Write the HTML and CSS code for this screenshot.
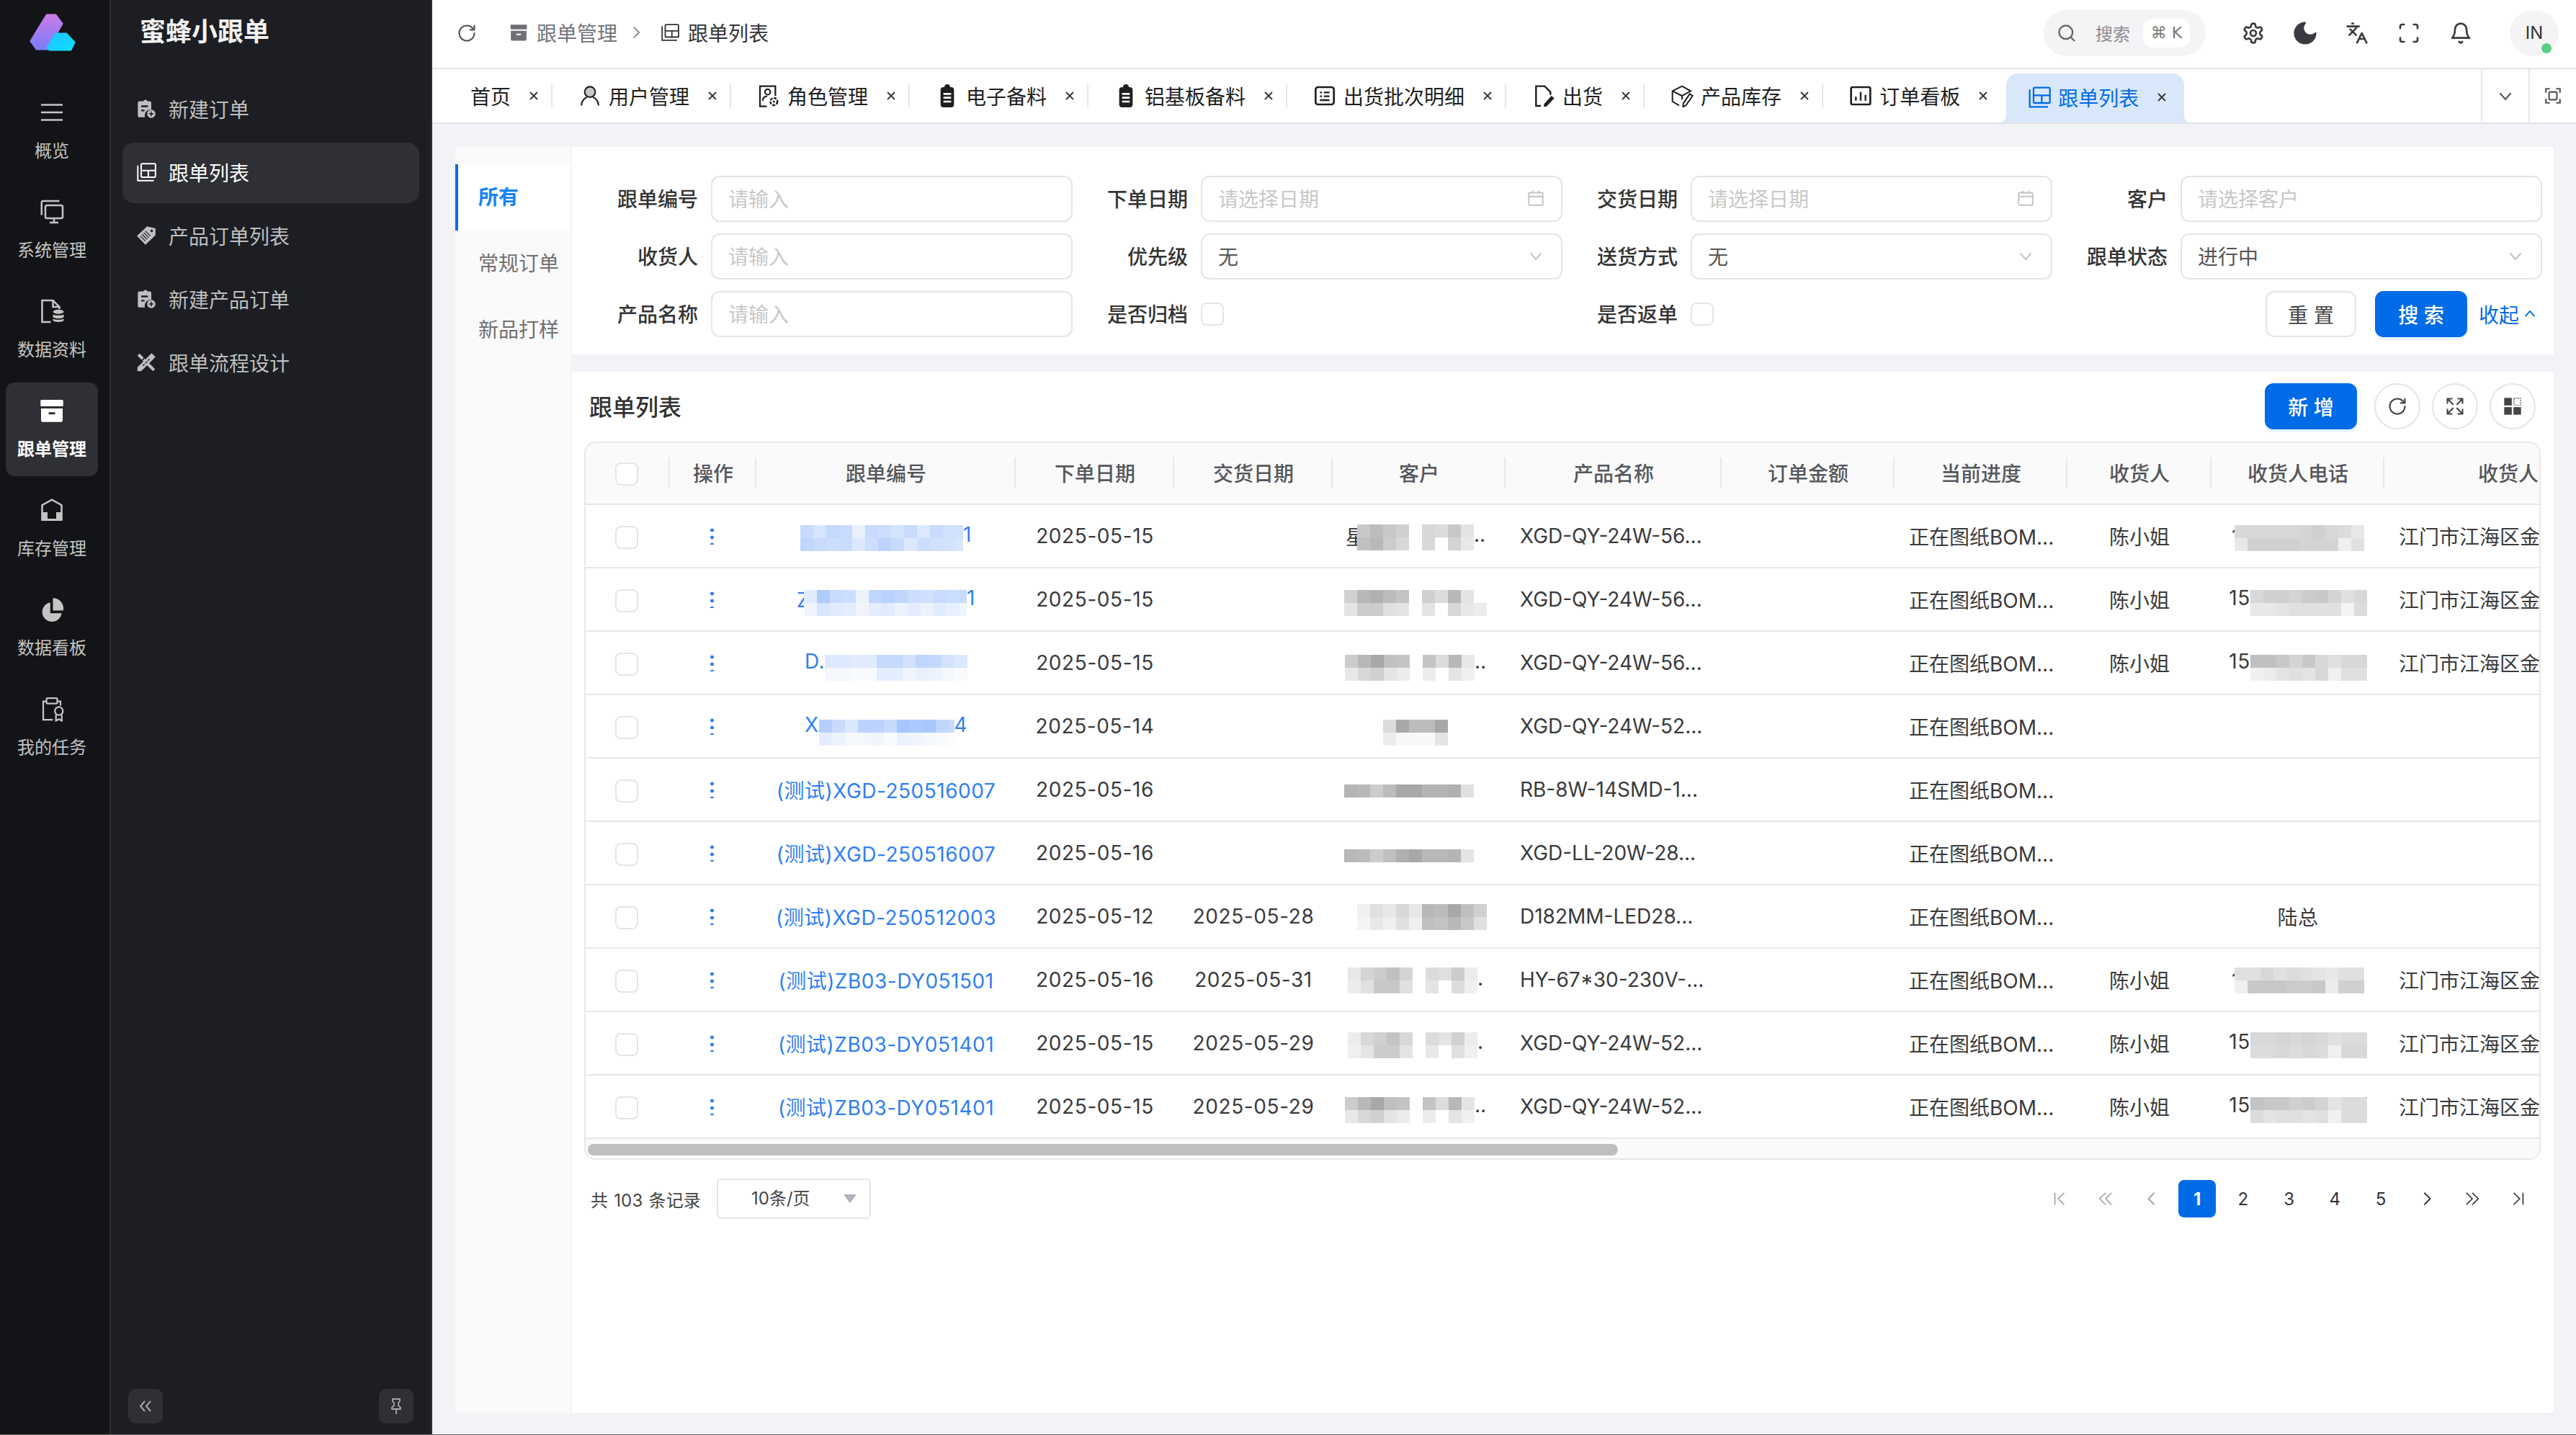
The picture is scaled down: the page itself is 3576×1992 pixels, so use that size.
FILE: index.html
```html
<!DOCTYPE html>
<html lang="zh-CN">
<head>
    <meta charset="UTF-8">
    <title>跟单列表</title>
    <link rel="stylesheet" href="styles.css">
</head>
<body>
    <svg class="icon-defs" xmlns="http://www.w3.org/2000/svg">
        <symbol id="i-menu" viewBox="0 0 24 24"><path d="M2 5h20M2 12h20M2 19h20" fill="none" stroke="currentColor" stroke-width="1.7"/></symbol>
        <symbol id="i-monitor" viewBox="0 0 24 24"><path d="M19 2H4a1.5 1.5 0 0 0-1.500 1.500V15" fill="none" stroke="currentColor" stroke-width="1.700"/><rect x="6" y="6" width="16" height="12" rx="1.500" fill="none" stroke="currentColor" stroke-width="1.700"/><path d="M14 18v3.500M10 22h8" fill="none" stroke="currentColor" stroke-width="1.700"/></symbol>
        <symbol id="i-docdb" viewBox="0 0 24 24"><path d="M11 22H3V2h10l6 6v2M13 2v6h6" fill="none" stroke="currentColor" stroke-width="1.700"/><ellipse cx="18" cy="12.500" rx="5" ry="2" fill="currentColor"/><path d="M13 15c1 1.200 9 1.200 10 0v2.500c-1 1.600-9 1.600-10 0zM13 19c1 1.200 9 1.200 10 0v1.500c-1 2-9 2-10 0z" fill="currentColor"/></symbol>
        <symbol id="i-box" viewBox="0 0 24 24"><rect x="1.500" y="2" width="21" height="6" rx="1" fill="currentColor"/><path fill-rule="evenodd" d="M2 10h20v11a1.500 1.500 0 0 1-1.500 1.500h-17A1.500 1.500 0 0 1 2 21zM9 13.500v2h6v-2z" fill="currentColor"/></symbol>
        <symbol id="i-store" viewBox="0 0 24 24"><path d="M3 21V7.500L12 2.500l9 5V21z" fill="none" stroke="currentColor" stroke-width="1.700"/><path d="M2.500 14H8v6h8v-6h5.500v8h-19z" fill="currentColor"/></symbol>
        <symbol id="i-pie" viewBox="0 0 24 24"><path d="M10.500 5.500A9 9 0 1 0 21 15.500H10.500z" fill="currentColor"/><path d="M13 1.500a9.500 9.500 0 0 1 9.500 11.500H13z" fill="currentColor"/></symbol>
        <symbol id="i-task" viewBox="0 0 24 24"><path d="M7 5H4v17h9M17 5h3v4" fill="none" stroke="currentColor" stroke-width="1.500"/><rect x="7" y="2" width="10" height="5" rx="1" fill="none" stroke="currentColor" stroke-width="1.500"/><circle cx="18.500" cy="14" r="3.700" fill="none" stroke="currentColor" stroke-width="1.500"/><path d="M15.800 17.500v5.500l2.700-1.500 2.700 1.500v-5.500" fill="none" stroke="currentColor" stroke-width="1.500"/></symbol>
        <symbol id="i-clipplus" viewBox="0 0 24 24"><path fill-rule="evenodd" d="M7 3h1.500a2.700 2.700 0 0 1 5 0H16a2 2 0 0 1 2 2v8a7 7 0 0 0-7.500 9H3a2 2 0 0 1-1-1.500V5a2 2 0 0 1 2-2zM6 8v2h8V8zM6 13v2h4v-2z" fill="currentColor"/><circle cx="18" cy="18" r="5" fill="currentColor"/><path d="M18 15.200v5.600M15.200 18h5.600" stroke="#1c1e23" stroke-width="1.300"/></symbol>
        <symbol id="i-table" viewBox="0 0 24 24"><path d="M2 4v18h19" fill="none" stroke="currentColor" stroke-width="1.700"/><rect x="6" y="2" width="17" height="16" rx="1" fill="none" stroke="currentColor" stroke-width="1.700"/><path d="M6 10h17M14.500 10v8" fill="none" stroke="currentColor" stroke-width="1.700"/></symbol>
        <symbol id="i-tag" viewBox="0 0 24 24"><path fill-rule="evenodd" d="M13 1l10 2.500 0 8L11 23 1 12.500zM18.500 5a1.500 1.500 0 1 0 .1 3 1.500 1.500 0 0 0-.1-3z" fill="currentColor"/><path d="M11 6.500l6 6M9 8.500l6 6M7 10.500l6 6M5 12.500l6 6" stroke="#1c1e23" stroke-width="1"/></symbol>
        <symbol id="i-tools" viewBox="0 0 24 24"><path d="M4 1.500 9 6.500 6.500 9 7.500 10 10 7.500 22.500 20 20 22.500 1.500 4z" fill="currentColor"/><path d="M18.500 1 23 5.500 6 22.500H1.500V18z" fill="currentColor"/><path d="M14 10l2-2M11 13l2-2M8 16l2-2" stroke="#1c1e23" stroke-width="1.200"/></symbol>
        <symbol id="i-user" viewBox="0 0 24 24"><circle cx="12" cy="8" r="5.500" fill="#c8c8c8" stroke="currentColor" stroke-width="1.600"/><path d="M3 22c.5-5 3.500-8 6-8.500M21 22c-.5-5-3.500-8-6-8.500" fill="none" stroke="currentColor" stroke-width="1.600"/></symbol>
        <symbol id="i-role" viewBox="0 0 24 24"><path d="M10 23H3V2h16v10" fill="none" stroke="currentColor" stroke-width="1.700"/><circle cx="11" cy="8" r="2.800" fill="none" stroke="currentColor" stroke-width="1.700"/><path d="M6 17c0-3 2-4.500 4.500-4.500" fill="none" stroke="currentColor" stroke-width="1.700"/><circle cx="17.500" cy="18" r="3.700" fill="none" stroke="currentColor" stroke-width="1.900" stroke-dasharray="3 1.200"/><circle cx="17.500" cy="18" r="1.200" fill="currentColor"/></symbol>
        <symbol id="i-clip" viewBox="0 0 24 24"><path fill-rule="evenodd" d="M8 3h1a3 3 0 0 1 6 0h1a3 3 0 0 1 3 3v15a3 3 0 0 1-3 3H8a3 3 0 0 1-3-3V6a3 3 0 0 1 3-3zM8 9v2h8V9zM8 13v2h8v-2zM8 17v2h8v-2z" fill="currentColor"/></symbol>
        <symbol id="i-list" viewBox="0 0 24 24"><rect x="2.500" y="3" width="19" height="18" rx="2.500" fill="none" stroke="currentColor" stroke-width="2"/><path d="M7 8.500h2M11 8.500h6M7 12.500h2M11 12.500h6M7 16.500h10" stroke="currentColor" stroke-width="1.800"/></symbol>
        <symbol id="i-ship" viewBox="0 0 24 24"><path d="M9 22.500H4V2h9l6 6v3" fill="none" stroke="currentColor" stroke-width="1.800"/><path d="M20 12l3 2.500-8 8.500-3 .5.500-3z" fill="currentColor"/></symbol>
        <symbol id="i-stock" viewBox="0 0 24 24"><path d="M12 2 2 7v11l7 4M12 2l9 5-9 5-10-5M12 12v4" fill="none" stroke="currentColor" stroke-width="1.500"/><path d="M20 10l3 2-7 10-3 1.500.3-3.500z" fill="none" stroke="currentColor" stroke-width="1.500"/></symbol>
        <symbol id="i-board" viewBox="0 0 24 24"><rect x="2" y="3" width="20" height="18" rx="1.500" fill="none" stroke="currentColor" stroke-width="2"/><path d="M7 17v-4M12 17V8M17 17v-6" stroke="currentColor" stroke-width="1.800"/></symbol>
        <symbol id="i-refresh" viewBox="0 0 24 24"><path d="M21 12a9 9 0 1 1-9-9c2.520 0 4.930 1 6.740 2.740L21 8M21 3v5h-5" fill="none" stroke="currentColor" stroke-width="1.800" stroke-linecap="round" stroke-linejoin="round"/></symbol>
        <symbol id="i-search" viewBox="0 0 24 24"><circle cx="11" cy="11" r="8" fill="none" stroke="currentColor" stroke-width="2"/><path d="m21 21-4.300-4.300" stroke="currentColor" stroke-width="2" stroke-linecap="round"/></symbol>
        <symbol id="i-settings" viewBox="0 0 24 24"><path d="M12.220 2h-.44a2 2 0 0 0-2 2v.18a2 2 0 0 1-1 1.730l-.43.25a2 2 0 0 1-2 0l-.15-.08a2 2 0 0 0-2.730.73l-.22.38a2 2 0 0 0 .73 2.730l.15.1a2 2 0 0 1 1 1.720v.51a2 2 0 0 1-1 1.740l-.15.09a2 2 0 0 0-.73 2.730l.22.38a2 2 0 0 0 2.730.73l.15-.08a2 2 0 0 1 2 0l.43.25a2 2 0 0 1 1 1.730V20a2 2 0 0 0 2 2h.44a2 2 0 0 0 2-2v-.18a2 2 0 0 1 1-1.730l.43-.25a2 2 0 0 1 2 0l.15.08a2 2 0 0 0 2.730-.73l.22-.39a2 2 0 0 0-.73-2.730l-.15-.08a2 2 0 0 1-1-1.740v-.5a2 2 0 0 1 1-1.740l.15-.09a2 2 0 0 0 .73-2.730l-.22-.38a2 2 0 0 0-2.730-.73l-.15.08a2 2 0 0 1-2 0l-.43-.25a2 2 0 0 1-1-1.730V4a2 2 0 0 0-2-2z" fill="none" stroke="currentColor" stroke-width="2"/><circle cx="12" cy="12" r="3" fill="none" stroke="currentColor" stroke-width="2"/></symbol>
        <symbol id="i-moon" viewBox="2 2 20 20"><path d="M12 3a6 6 0 0 0 9 9 9 9 0 1 1-9-9Z" fill="currentColor" stroke="currentColor" stroke-width="1.500" stroke-linejoin="round"/></symbol>
        <symbol id="i-lang" viewBox="0 0 24 24"><path d="m5 8 6 6M4 14l6-6 2-3M2 5h12M7 2h1M22 22l-5-10-5 10M14 18h6" fill="none" stroke="currentColor" stroke-width="2" stroke-linecap="round" stroke-linejoin="round"/></symbol>
        <symbol id="i-full" viewBox="0 0 24 24"><path d="M3 7V5a2 2 0 0 1 2-2h2M17 3h2a2 2 0 0 1 2 2v2M21 17v2a2 2 0 0 1-2 2h-2M7 21H5a2 2 0 0 1-2-2v-2" fill="none" stroke="currentColor" stroke-width="2" stroke-linecap="round"/></symbol>
        <symbol id="i-bell" viewBox="0 0 24 24"><path d="M6 8a6 6 0 0 1 12 0c0 7 3 9 3 9H3s3-2 3-9M10.300 21a1.940 1.940 0 0 0 3.400 0" fill="none" stroke="currentColor" stroke-width="2" stroke-linecap="round" stroke-linejoin="round"/></symbol>
        <symbol id="i-close" viewBox="0 0 14 14"><path d="M2 2l10 10M12 2 2 12" stroke="currentColor" stroke-width="1.800"/></symbol>
        <symbol id="i-down" viewBox="0 0 24 24"><path d="M5 8.500l7 8 7-8" fill="none" stroke="currentColor" stroke-width="2"/></symbol>
        <symbol id="i-scan" viewBox="0 0 24 24"><path d="M3 8V3h5M16 3h5v5M21 16v5h-5M8 21H3v-5" fill="none" stroke="currentColor" stroke-width="2"/><rect x="7" y="7" width="10" height="10" rx="1.500" fill="none" stroke="currentColor" stroke-width="2"/></symbol>
        <symbol id="i-cal" viewBox="0 0 24 24"><rect x="3" y="5" width="18" height="16" rx="1.500" fill="none" stroke="currentColor" stroke-width="1.800"/><path d="M3 10h18M8 2.500V6M16 2.500V6" stroke="currentColor" stroke-width="1.800"/></symbol>
        <symbol id="i-grid" viewBox="0 0 24 24"><rect x="2" y="2" width="9" height="9" fill="currentColor"/><rect x="2" y="13" width="9" height="9" fill="currentColor"/><rect x="13" y="13" width="9" height="9" fill="currentColor"/><rect x="13.500" y="2.500" width="8" height="8" fill="none" stroke="currentColor" stroke-dasharray="1.500 1"/></symbol>
        <symbol id="i-expand" viewBox="0 0 24 24"><path d="M3 9V3h6M3 3l7 7M15 3h6v6M21 3l-7 7M21 15v6h-6M21 21l-7-7M9 21H3v-6M3 21l7-7" fill="none" stroke="currentColor" stroke-width="1.800"/></symbol>
        <symbol id="i-first" viewBox="0 0 24 24"><path d="M5 3v18M19 3l-9 9 9 9" fill="none" stroke="currentColor" stroke-width="1.800"/></symbol>
        <symbol id="i-prev2" viewBox="0 0 24 24"><path d="M12 3l-9 9 9 9M21 3l-9 9 9 9" fill="none" stroke="currentColor" stroke-width="1.800"/></symbol>
        <symbol id="i-prev" viewBox="0 0 24 24"><path d="M16 3l-9 9 9 9" fill="none" stroke="currentColor" stroke-width="2"/></symbol>
        <symbol id="i-next" viewBox="0 0 24 24"><path d="M8 3l9 9-9 9" fill="none" stroke="currentColor" stroke-width="2"/></symbol>
        <symbol id="i-next2" viewBox="0 0 24 24"><path d="M3 3l9 9-9 9M12 3l9 9-9 9" fill="none" stroke="currentColor" stroke-width="1.800"/></symbol>
        <symbol id="i-last" viewBox="0 0 24 24"><path d="M19 3v18M5 3l9 9-9 9" fill="none" stroke="currentColor" stroke-width="1.800"/></symbol>
        <symbol id="i-left2" viewBox="0 0 24 24"><path d="M11 5l-6 7 6 7M19 5l-6 7 6 7" fill="none" stroke="currentColor" stroke-width="2"/></symbol>
        <symbol id="i-pin" viewBox="0 0 24 24"><path d="M7 2h10v3l-2 2.500v3.500l3 3v2H6v-2l3-3V7.500L7 5zM12 16v7" fill="none" stroke="currentColor" stroke-width="1.800" stroke-linejoin="round"/></symbol>
        <linearGradient id="logo-a" x1="0" y1="0" x2="0" y2="1"><stop offset="0" stop-color="#cb7be6"/><stop offset="1" stop-color="#7a7cfb"/></linearGradient>
        <linearGradient id="logo-b" x1="0" y1="0" x2="1" y2="1"><stop offset="0" stop-color="#1cc4ff"/><stop offset="1" stop-color="#12dcff"/></linearGradient>
    </svg>

    <div class="app">
        <nav class="rail">
            <svg class="logo" viewBox="0 0 64 52">
                <path d="M24 2h12l9 12-20 35H10L2 38z" fill="url(#logo-a)" stroke="url(#logo-a)" stroke-width="3" stroke-linejoin="round"/>
                <path d="M36 28h15l11 12-5 10H28l-3-2z" fill="url(#logo-b)" stroke="url(#logo-b)" stroke-width="3" stroke-linejoin="round"/>
            </svg>
            <a class="rail-item"><svg><use href="#i-menu"/></svg>概览</a>
            <a class="rail-item"><svg><use href="#i-monitor"/></svg>系统管理</a>
            <a class="rail-item"><svg><use href="#i-docdb"/></svg>数据资料</a>
            <a class="rail-item rail-active"><svg><use href="#i-box"/></svg>跟单管理</a>
            <a class="rail-item"><svg><use href="#i-store"/></svg>库存管理</a>
            <a class="rail-item"><svg><use href="#i-pie"/></svg>数据看板</a>
            <a class="rail-item"><svg><use href="#i-task"/></svg>我的任务</a>
        </nav>

        <aside class="menu">
            <div class="menu-title">蜜蜂小跟单</div>
            <a class="menu-item"><svg><use href="#i-clipplus"/></svg>新建订单</a>
            <a class="menu-item menu-active"><svg><use href="#i-table"/></svg>跟单列表</a>
            <a class="menu-item"><svg><use href="#i-tag"/></svg>产品订单列表</a>
            <a class="menu-item"><svg><use href="#i-clipplus"/></svg>新建产品订单</a>
            <a class="menu-item"><svg><use href="#i-tools"/></svg>跟单流程设计</a>
            <div class="menu-foot">
                <button class="menu-btn"><svg><use href="#i-left2"/></svg></button>
                <button class="menu-btn"><svg><use href="#i-pin"/></svg></button>
            </div>
        </aside>

        <div class="main">
            <header class="topbar">
                <svg class="top-refresh"><use href="#i-refresh"/></svg>
                <div class="crumbs">
                    <svg class="crumb-icon"><use href="#i-box"/></svg><span class="crumb-dim">跟单管理</span>
                    <svg class="crumb-sep"><use href="#i-next"/></svg>
                    <svg class="crumb-icon crumb-now"><use href="#i-table"/></svg><span class="crumb-now">跟单列表</span>
                </div>
                <div class="search-pill">
                    <svg><use href="#i-search"/></svg><span class="search-text">搜索</span><span class="kbd">⌘ K</span>
                </div>
                <svg class="top-icon"><use href="#i-settings"/></svg>
                <svg class="top-icon"><use href="#i-moon"/></svg>
                <svg class="top-icon"><use href="#i-lang"/></svg>
                <svg class="top-icon"><use href="#i-full"/></svg>
                <svg class="top-icon"><use href="#i-bell"/></svg>
                <div class="avatar">IN<span class="avatar-dot"></span></div>
            </header>

            <div class="tabbar">
                <div class="tabs">
                    <a class="tab">首页<svg class="tab-x"><use href="#i-close"/></svg></a><i class="tab-sep"></i>
                    <a class="tab"><svg class="tab-icon"><use href="#i-user"/></svg>用户管理<svg class="tab-x"><use href="#i-close"/></svg></a><i class="tab-sep"></i>
                    <a class="tab"><svg class="tab-icon"><use href="#i-role"/></svg>角色管理<svg class="tab-x"><use href="#i-close"/></svg></a><i class="tab-sep"></i>
                    <a class="tab"><svg class="tab-icon"><use href="#i-clip"/></svg>电子备料<svg class="tab-x"><use href="#i-close"/></svg></a><i class="tab-sep"></i>
                    <a class="tab"><svg class="tab-icon"><use href="#i-clip"/></svg>铝基板备料<svg class="tab-x"><use href="#i-close"/></svg></a><i class="tab-sep"></i>
                    <a class="tab"><svg class="tab-icon"><use href="#i-list"/></svg>出货批次明细<svg class="tab-x"><use href="#i-close"/></svg></a><i class="tab-sep"></i>
                    <a class="tab"><svg class="tab-icon"><use href="#i-ship"/></svg>出货<svg class="tab-x"><use href="#i-close"/></svg></a><i class="tab-sep"></i>
                    <a class="tab"><svg class="tab-icon"><use href="#i-stock"/></svg>产品库存<svg class="tab-x"><use href="#i-close"/></svg></a><i class="tab-sep"></i>
                    <a class="tab"><svg class="tab-icon"><use href="#i-board"/></svg>订单看板<svg class="tab-x"><use href="#i-close"/></svg></a>
                    <a class="tab tab-active"><svg class="tab-icon"><use href="#i-table"/></svg>跟单列表<svg class="tab-x"><use href="#i-close"/></svg></a>
                </div>
                <div class="tab-tool"><svg><use href="#i-down"/></svg></div>
                <div class="tab-tool"><svg><use href="#i-scan"/></svg></div>
            </div>

            <div class="content">
                <div class="side-tabs">
                    <a class="side-tab side-tab-active">所有</a>
                    <a class="side-tab">常规订单</a>
                    <a class="side-tab">新品打样</a>
                </div>
                <div class="panels">
                    <form class="filter">
                        <div class="field"><label>跟单编号</label><div class="input placeholder">请输入</div></div>
                        <div class="field"><label>下单日期</label><div class="input placeholder">请选择日期<svg><use href="#i-cal"/></svg></div></div>
                        <div class="field"><label>交货日期</label><div class="input placeholder">请选择日期<svg><use href="#i-cal"/></svg></div></div>
                        <div class="field"><label>客户</label><div class="input placeholder">请选择客户</div></div>
                        <div class="field"><label>收货人</label><div class="input placeholder">请输入</div></div>
                        <div class="field"><label>优先级</label><div class="input">无<svg><use href="#i-down"/></svg></div></div>
                        <div class="field"><label>送货方式</label><div class="input">无<svg><use href="#i-down"/></svg></div></div>
                        <div class="field"><label>跟单状态</label><div class="input">进行中<svg><use href="#i-down"/></svg></div></div>
                        <div class="field"><label>产品名称</label><div class="input placeholder">请输入</div></div>
                        <div class="field"><label>是否归档</label><span class="check"></span></div>
                        <div class="field"><label>是否返单</label><span class="check"></span></div>
                        <div class="field field-actions">
                            <button type="button" class="btn">重 置</button>
                            <button type="button" class="btn btn-primary">搜 索</button>
                            <a class="collapse">收起<svg><use href="#i-down"/></svg></a>
                        </div>
                    </form>

                    <section class="card">
                        <div class="card-head">
                            <h2>跟单列表</h2>
                            <button type="button" class="btn btn-primary">新 增</button>
                            <button type="button" class="round"><svg><use href="#i-refresh"/></svg></button>
                            <button type="button" class="round"><svg><use href="#i-expand"/></svg></button>
                            <button type="button" class="round"><svg><use href="#i-grid"/></svg></button>
                        </div>
                        <div class="table-box">
                            <table class="orders">
                                <colgroup>
                                    <col class="c1"><col class="c2"><col class="c3"><col class="c4"><col class="c4"><col class="c5"><col class="c6"><col class="c5"><col class="c5"><col class="c7"><col class="c5"><col class="c8">
                                </colgroup>
                                <thead>
                                    <tr>
                                        <th><span class="check"></span></th>
                                        <th>操作</th>
                                        <th>跟单编号</th>
                                        <th>下单日期</th>
                                        <th>交货日期</th>
                                        <th>客户</th>
                                        <th>产品名称</th>
                                        <th>订单金额</th>
                                        <th>当前进度</th>
                                        <th>收货人</th>
                                        <th>收货人电话</th>
                                        <th>收货人地址</th>
                                    </tr>
                                </thead>
                                <tbody id="rows"></tbody>
                            </table>
                            <div class="scrollbar"><div class="scroll-thumb"></div></div>
                        </div>
                        <div class="pager">
                            <span class="total">共 103 条记录</span>
                            <div class="size-select">10条/页<i class="caret"></i></div>
                            <div class="pages">
                                <a class="page page-off"><svg><use href="#i-first"/></svg></a>
                                <a class="page page-off"><svg><use href="#i-prev2"/></svg></a>
                                <a class="page page-off"><svg><use href="#i-prev"/></svg></a>
                                <a class="page page-on">1</a>
                                <a class="page">2</a>
                                <a class="page">3</a>
                                <a class="page">4</a>
                                <a class="page">5</a>
                                <a class="page"><svg><use href="#i-next"/></svg></a>
                                <a class="page"><svg><use href="#i-next2"/></svg></a>
                                <a class="page"><svg><use href="#i-last"/></svg></a>
                            </div>
                        </div>
                    </section>
                </div>
            </div>
        </div>
    </div>
    <script src="table.js"></script>
</body>
</html>
```

FILE: styles.css
```css
* {
    box-sizing: border-box;
}
html, body {
    margin: 0;
    height: 100%;
}
body {
    font-family: Inter, "Noto Sans CJK SC", "DejaVu Sans", sans-serif;
    font-size: 28px;
    color: #333;
    background: #6e6e6e;
    overflow: hidden;
}
svg {
    display: block;
}
.icon-defs {
    position: absolute;
    width: 0;
    height: 0;
}
.app {
    display: flex;
    height: 1991px;
}

/* left rail */
.rail {
    width: 154px;
    padding: 0 16px 0 8px;
    background: #131417;
    border-right: 2px solid #2c2e33;
    display: flex;
    flex-direction: column;
    gap: 8px;
}
.logo {
    width: 64px;
    height: 52px;
    margin: 19px 0 38px 33px;
    flex: none;
}
.rail-item {
    width: 128px;
    height: 130px;
    border-radius: 12px;
    display: flex;
    flex-direction: column;
    align-items: center;
    font-size: 24px;
    line-height: 32px;
    color: #c4c4c4;
    padding-top: 21px;
    gap: 20px;
}
.rail-item svg {
    width: 36px;
    height: 36px;
}
.rail-active {
    background: #2e3035;
    color: #fff;
    font-weight: 700;
}

/* second menu */
.menu {
    position: relative;
    width: 446px;
    padding: 0 16px;
    background: #1c1e23;
    border-right: 2px solid #2c2e33;
    display: flex;
    flex-direction: column;
    gap: 4px;
}
.menu-title {
    height: 106px;
    padding: 23px 0 0 24px;
    font-size: 36px;
    font-weight: 700;
    line-height: 42px;
    color: #f2f2f2;
}
.menu-item {
    height: 84px;
    border-radius: 16px;
    display: flex;
    align-items: center;
    gap: 17px;
    padding: 0 0 2px 19px;
    color: #bfbfbf;
}
.menu-item svg {
    width: 28px;
    height: 28px;
}
.menu-active {
    background: #2e3035;
    color: #fff;
}
.menu-foot {
    margin-top: auto;
    margin-bottom: 15px;
    padding: 0 8px;
    display: flex;
    justify-content: space-between;
}
.menu-btn {
    width: 48px;
    height: 48px;
    padding: 0;
    border: none;
    border-radius: 10px;
    background: #2e3035;
    color: #a8a8a8;
    display: flex;
    align-items: center;
    justify-content: center;
}
.menu-btn svg {
    width: 24px;
    height: 24px;
}

/* main column */
.main {
    flex: 1;
    min-width: 0;
    background: #f1f3f7;
    display: flex;
    flex-direction: column;
}
.topbar {
    height: 96px;
    flex: none;
    background: #fff;
    border-bottom: 2px solid #e5e5e8;
    display: flex;
    align-items: center;
    padding: 0 24px 2px 34px;
}
.top-refresh {
    width: 28px;
    height: 28px;
    color: #555;
    margin-right: 45px;
}
.crumbs {
    display: flex;
    align-items: center;
    flex: 1;
    padding-bottom: 2px;
}
.crumb-icon {
    width: 26px;
    height: 28px;
    margin-right: 12px;
    color: #6f7076;
}
.crumb-dim {
    color: #72747a;
}
.crumb-now {
    color: #333;
}
.crumb-sep {
    width: 20px;
    height: 22px;
    margin: 0 24px 0 16px;
    color: #72747a;
}
.search-pill {
    width: 225px;
    height: 64px;
    border-radius: 32px;
    background: #f4f4f6;
    display: flex;
    align-items: center;
    padding-left: 18px;
    margin-right: 30px;
    color: #666;
}
.search-pill svg {
    width: 28px;
    height: 28px;
}
.search-text {
    font-size: 24px;
    color: #8b8b90;
    margin-left: 26px;
    padding-bottom: 2px;
}
.kbd {
    margin-left: 18px;
    width: 65px;
    height: 40px;
    border-radius: 14px;
    background: #fff;
    font-size: 22px;
    line-height: 40px;
    text-align: center;
    color: #777;
    font-family: "DejaVu Sans", sans-serif;
}
.top-icon {
    width: 72px;
    height: 32px;
    padding: 0 20px;
    color: #3a3b40;
}
.avatar {
    position: relative;
    width: 68px;
    height: 64px;
    margin-left: 32px;
    border-radius: 50%;
    background: #f4f4f6;
    font-size: 24px;
    line-height: 64px;
    text-align: center;
    color: #333;
}
.avatar-dot {
    position: absolute;
    right: 9px;
    bottom: 3px;
    width: 16px;
    height: 16px;
    border-radius: 50%;
    background: #58cf84;
    border: 1px solid #fff;
}

/* tab strip */
.tabbar {
    height: 76px;
    flex: none;
    background: #fff;
    border-bottom: 2px solid #e2e3e8;
    display: flex;
}
.tabs {
    flex: 1;
    min-width: 0;
    display: flex;
    align-items: center;
    padding-left: 17px;
    color: #1f1f1f;
}
.tab {
    display: flex;
    align-items: center;
    height: 48px;
    padding: 0 19px 0 36px;
    white-space: nowrap;
}
.tab-icon {
    width: 32px;
    height: 32px;
    margin-right: 10px;
    flex: none;
}
.tab-x {
    width: 14px;
    height: 14px;
    margin-left: 25px;
    flex: none;
    color: #333;
}
.tab-sep {
    width: 2px;
    height: 32px;
    background: #e5e5e8;
    flex: none;
    margin-left: -2px;
}
.tab-active {
    position: relative;
    align-self: flex-end;
    height: 68px;
    margin-left: 6px;
    padding: 0 24px 2px 30px;
    border-radius: 16px 16px 0 0;
    background: #d9e7fb;
    color: #006be6;
}
.tab-active::before,
.tab-active::after {
    content: "";
    position: absolute;
    bottom: 0;
    width: 10px;
    height: 10px;
}
.tab-active::before {
    left: -10px;
    background: radial-gradient(circle at 0 0, transparent 10px, #d9e7fb 10.500px);
}
.tab-active::after {
    right: -10px;
    background: radial-gradient(circle at 100% 0, transparent 10px, #d9e7fb 10.500px);
}
.tab-tool {
    width: 66px;
    border-left: 2px solid #e5e5e8;
    display: flex;
    align-items: center;
    justify-content: center;
    color: #55565c;
}
.tab-tool svg {
    width: 26px;
    height: 26px;
}

/* content */
.content {
    flex: 1;
    min-height: 0;
    display: flex;
    padding: 32px 31px 30px 32px;
    gap: 2px;
}
.side-tabs {
    width: 160px;
    flex: none;
    background: #fafafa;
    padding-top: 24px;
}
.side-tab {
    display: block;
    height: 92px;
    line-height: 92px;
    padding-left: 32px;
    color: #707070;
}
.side-tab-active {
    background: #fff;
    border-left: 4px solid #006be6;
    padding-left: 28px;
    color: #1583f5;
    font-weight: 700;
}
.panels {
    flex: 1;
    min-width: 0;
    display: flex;
    flex-direction: column;
    gap: 24px;
}

/* filter form */
.filter {
    height: 288px;
    flex: none;
    background: #fff;
    padding: 40px 16px 0 33px;
    display: grid;
    grid-template-columns: repeat(4, 1fr);
    column-gap: 18px;
    row-gap: 16px;
    align-content: start;
}
.field {
    display: flex;
    align-items: center;
    height: 64px;
}
.field label {
    width: 142px;
    margin-right: 18px;
    padding-bottom: 2px;
    flex: none;
    text-align: right;
    font-weight: 500;
    color: #333;
}
.input {
    flex: 1;
    height: 64px;
    border: 2px solid #e5e5e8;
    border-radius: 12px;
    display: flex;
    align-items: center;
    justify-content: space-between;
    padding: 0 22px 2px;
    color: #555;
}
.input svg {
    width: 26px;
    height: 26px;
    color: #c4c4c8;
}
.placeholder {
    color: #c8c8c8;
}
.check {
    display: inline-block;
    width: 32px;
    height: 32px;
    border: 2px solid #e5e5e8;
    border-radius: 8px;
    background: #fff;
    vertical-align: middle;
}
.field-actions {
    justify-content: flex-end;
    padding-right: 6px;
}
.btn {
    height: 64px;
    width: 126px;
    border: 2px solid #e5e5e8;
    border-radius: 12px;
    background: #fff;
    font: inherit;
    color: #444;
    padding: 0;
    margin-right: 26px;
}
.btn-primary {
    border: none;
    width: 128px;
    background: #006be6;
    color: #fff;
    font-weight: 500;
    box-shadow: 0 4px 0 #e8f4ff;
    margin-right: 16px;
}
.collapse {
    display: flex;
    align-items: center;
    color: #006be6;
}
.collapse svg {
    width: 22px;
    height: 22px;
    margin-left: 4px;
    transform: rotate(180deg);
}

/* table card */
.card {
    flex: 1;
    min-height: 0;
    background: #fff;
    padding: 16px 18px 0 17px;
}
.card-head {
    display: flex;
    align-items: center;
    height: 64px;
    margin-bottom: 17px;
    padding-right: 7px;
}
.card-head h2 {
    flex: 1;
    margin: 0 0 2px;
    padding-left: 7px;
    font-size: 32px;
    font-weight: 500;
    color: #333;
}
.card-head .btn-primary {
    margin-right: 24px;
    width: 128px;
}
.round {
    width: 64px;
    height: 64px;
    margin-left: 16px;
    padding: 0;
    border: 2px solid #e5e5e8;
    border-radius: 50%;
    background: #fff;
    color: #444;
    display: flex;
    align-items: center;
    justify-content: center;
}
.card-head .btn-primary + .round {
    margin-left: 0;
}
.round svg {
    width: 28px;
    height: 28px;
}
.table-box {
    width: 2716px;
    border: 2px solid #e8e8e8;
    border-radius: 16px;
    overflow: hidden;
}
.orders {
    width: 2897px;
    table-layout: fixed;
    border-collapse: separate;
    border-spacing: 0;
}
.c1 { width: 117px; }
.c2 { width: 120px; }
.c3 { width: 360px; }
.c4 { width: 220px; }
.c5 { width: 240px; }
.c6 { width: 300px; }
.c7 { width: 200px; }
.c8 { width: 400px; }
.orders th {
    position: relative;
    height: 86px;
    padding: 0 0 2px;
    background: #fafafa;
    border-bottom: 2px solid #e8e8e8;
    font-weight: 500;
    color: #55575c;
}
.orders th::after {
    content: "";
    position: absolute;
    right: 0;
    top: 20px;
    width: 2px;
    height: 43px;
    background: #e8e8e8;
}
.orders th:first-child {
    padding-right: 3px;
}
.orders td {
    height: 88px;
    padding: 0;
    border-bottom: 2px solid #e8e8e8;
    white-space: nowrap;
    text-align: center;
    color: #3a3a3c;
}
.orders td:first-child {
    padding-right: 3px;
}
.orders .left {
    text-align: left;
    padding-left: 20px;
}
.orders .cust {
    padding-right: 10px;
}
.orders .date {
    letter-spacing: 0.6px;
}
.orders .link {
    color: #2f7ff2;
    letter-spacing: 0.5px;
}
.orders .check {
    margin-top: 2px;
}
.dots {
    width: 5px;
    height: 24px;
    margin: 0 auto;
    transform: translateX(-2px);
    background: radial-gradient(circle, #2f7ff2 2.200px, transparent 2.800px) 0 -1px / 5px 10px repeat-y;
}
.mosaic {
    display: inline-grid;
    grid-auto-rows: 18px;
    vertical-align: middle;
}
.under {
    vertical-align: middle;
}
.scrollbar {
    height: 27px;
    background: #fafafa;
    padding: 7px 0 0 3px;
}
.scroll-thumb {
    width: 1430px;
    height: 16px;
    border-radius: 8px;
    background: #bfbfbf;
}

/* pagination */
.pager {
    display: flex;
    align-items: center;
    margin-top: 26px;
    padding-left: 9px;
    font-size: 24px;
}
.total {
    color: #444;
    margin-right: 22px;
    word-spacing: 1px;
    letter-spacing: 0.2px;
}
.size-select {
    position: relative;
    width: 214px;
    height: 56px;
    border: 2px solid #e5e5e8;
    border-radius: 6px;
    line-height: 52px;
    padding-left: 46px;
    color: #444;
}
.caret {
    position: absolute;
    right: 18px;
    top: 20px;
    width: 0;
    height: 0;
    border-left: 9px solid transparent;
    border-right: 9px solid transparent;
    border-top: 12px solid #aeb2b9;
}
.pages {
    margin-left: auto;
    margin-right: 5px;
    display: flex;
    gap: 11.700px;
}
.page {
    width: 52px;
    height: 52px;
    border-radius: 8px;
    display: flex;
    align-items: center;
    justify-content: center;
    color: #333;
}
.page svg {
    width: 22px;
    height: 24px;
}
.page-off {
    color: #a0a0a0;
}
.page-on {
    background: #006be6;
    color: #fff;
    font-weight: 700;
}
```

FILE: table.js
```js
// greys are written as two hex digits, "." leaves the square empty
// lastWidth narrows the last column, some blurred strips end mid-square
function mosaic(top, bottom, blue, lastWidth) {
    const a = top.split(' ');
    const b = bottom ? bottom.split(' ') : a.map(() => '.');
    const cell = (v) => {
        if (v === '.') return '<i></i>';
        const n = parseInt(v, 16);
        const col = blue
            ? `rgb(${n},${Math.round(n + (255 - n) * 0.35)},253)`
            : `rgb(${n},${n},${n + 2})`;
        return `<i style="background:${col}"></i>`;
    };
    const cols = `repeat(${a.length - 1},18px) ${lastWidth || 18}px`;
    return `<span class="mosaic" style="grid-template-columns:${cols}">`
        + a.concat(b).map(cell).join('') + '</span>';
}

// a glyph the blur partly covers: the strip slides over its right side
function under(text, overlap) {
    return `<span class="under" style="margin-right:-${overlap}px">${text}</span>`;
}

const CHEN = '陈小姐';
const ADDR = '江门市江海区金';
const BOM = '正在图纸BOM...';

const rows = [
    {
        dy: 2,
        no: mosaic('c8 d8 c4 c8 e8 c8 cc d4 c8 dc c8 d0 d0', 'c0 c8 cc c8 dc cc bc c8 dc cc d0 d4 d8', true, 10) + '1',
        date: '2025-05-15', due: '',
        cust: under('星', 12) + mosaic('c8 bc c8 d0 . d8 dc c8 e4', 'c0 b8 cc d8 . d8 ff d4 e8') + '..',
        prod: 'XGD-QY-24W-56...', prog: BOM, man: CHEN,
        tel: under('1', 8) + mosaic('d8 d8 d8 d8 d8 d4 d0 d8 dc e8', 'e8 d0 d0 d0 d0 d4 d4 d4 f0 e0'), addr: ADDR
    },
    {
        dy: 4,
        no: under('Z', 8) + mosaic('e0 b0 c8 cc ec c0 b8 c0 cc d0 c8 cc c8', 'f0 d8 e0 e4 f0 e4 e0 ec e4 ec e0 e8 f0', true, 10) + '1',
        date: '2025-05-15', due: '',
        cust: mosaic('d0 b8 b0 bc c4 . d0 dc b8 e4 ff', 'e4 cc cc e0 e4 . e4 ff d8 e8 ec'),
        prod: 'XGD-QY-24W-56...', prog: BOM, man: CHEN,
        tel: '15' + mosaic('d8 d0 d0 d4 cc c8 d4 e0 d8', 'e8 e8 e4 e0 e0 e0 e0 f4 dc'), addr: ADDR
    },
    {
        dy: 6,
        no: 'D.' + mosaic('dc dc e0 e0 c4 c4 d0 c0 c4 d4 dc', 'f4 f4 f8 f8 e4 e4 f0 e8 ec f4 f8', true),
        date: '2025-05-15', due: '',
        cust: mosaic('cc b8 a8 c0 c4 . c4 dc b8 e8', 'e8 d8 d0 e4 ec . ec ff e4 f0') + '..',
        prod: 'XGD-QY-24W-56...', prog: BOM, man: CHEN,
        tel: '15' + mosaic('c0 c0 c8 d4 c8 d8 e0 d8 d8', 'f0 ec e4 e0 e4 d8 f0 e0 e0'), addr: ADDR
    },
    {
        dy: 8,
        no: 'X' + mosaic('b4 c8 dc bc bc c8 a8 ac a8 c0 c8', 'e4 ec f4 f4 f0 f8 ec f0 f4 f8 fc', true, 8) + '4',
        date: '2025-05-14', due: '',
        cust: mosaic('dc a8 bc bc a8', 'ec f8 f8 f8 e4'),
        prod: 'XGD-QY-24W-52...', prog: BOM, man: '', tel: '', addr: ''
    },
    {
        dy: 10, dx: -9,
        no: '(测试)XGD-250516007', date: '2025-05-16', due: '',
        cust: mosaic('b4 b8 cc bc a8 a8 b4 b4 b0 e0'),
        prod: 'RB-8W-14SMD-1...', prog: BOM, man: '', tel: '', addr: ''
    },
    {
        dy: 12, dx: -9,
        no: '(测试)XGD-250516007', date: '2025-05-16', due: '',
        cust: mosaic('b8 bc cc c0 b0 a8 b8 b8 b4 e4'),
        prod: 'XGD-LL-20W-28...', prog: BOM, man: '', tel: '', addr: ''
    },
    {
        dy: 0, dx: 9,
        no: '(测试)XGD-250512003', date: '2025-05-12', due: '2025-05-28',
        cust: mosaic('f0 e0 e8 d8 e8 b8 bc a8 c0 d0', 'f4 e8 f0 e0 f0 c0 c4 b8 c8 e0'),
        prod: 'D182MM-LED28...', prog: BOM, man: '', tel: '陆总', addr: ''
    },
    {
        dy: 0,
        no: '(测试)ZB03-DY051501', date: '2025-05-16', due: '2025-05-31',
        cust: mosaic('e8 d4 cc c0 d4 . dc e0 cc ec', 'ec e0 c8 c8 e0 . e4 ff dc f0') + '.',
        prod: 'HY-67*30-230V-...', prog: BOM, man: CHEN,
        tel: under('1', 8) + mosaic('e0 e0 d8 e0 dc e0 e4 e8 e0 e0', 'f0 c8 c8 c8 cc cc c8 ec d0 d0'), addr: ADDR
    },
    {
        dy: 2,
        no: '(测试)ZB03-DY051401', date: '2025-05-15', due: '2025-05-29',
        cust: mosaic('ec d8 d0 c4 d8 . dc e4 d0 ec', 'f0 e4 cc cc e4 . e8 ff e0 f0') + '.',
        prod: 'XGD-QY-24W-52...', prog: BOM, man: CHEN,
        tel: '15' + mosaic('d8 d8 d4 d8 d4 d8 e0 dc dc', 'dc dc d8 dc d8 dc f0 d8 d8'), addr: ADDR
    },
    {
        dy: 4,
        no: '(测试)ZB03-DY051401', date: '2025-05-15', due: '2025-05-29',
        cust: mosaic('cc b8 a8 c0 c4 . c4 dc b8 e4', 'e8 d8 d0 e4 ec . ec ff e4 f0') + '..',
        prod: 'XGD-QY-24W-52...', prog: BOM, man: CHEN,
        tel: '15' + mosaic('c4 c8 c8 d0 cc d4 e4 dc dc', 'dc e4 e0 e0 e4 e0 f0 dc dc'), addr: ADDR
    }
];

const body = document.getElementById('rows');
rows.forEach((r) => {
    const shift = (html, dx) => html.replace(/class="mosaic" style="/g,
        `class="mosaic" style="transform:translate(${dx || 0}px,${r.dy}px);`);
    body.insertAdjacentHTML('beforeend', `<tr>
        <td><span class="check"></span></td>
        <td><div class="dots"></div></td>
        <td class="link">${shift(r.no)}</td>
        <td class="date">${r.date}</td>
        <td class="date">${r.due}</td>
        <td class="cust">${shift(r.cust, r.dx)}</td>
        <td class="left">${r.prod}</td>
        <td></td>
        <td class="left">${r.prog}</td>
        <td>${r.man}</td>
        <td class="date">${shift(r.tel)}</td>
        <td class="left">${r.addr}</td>
    </tr>`);
});
```
